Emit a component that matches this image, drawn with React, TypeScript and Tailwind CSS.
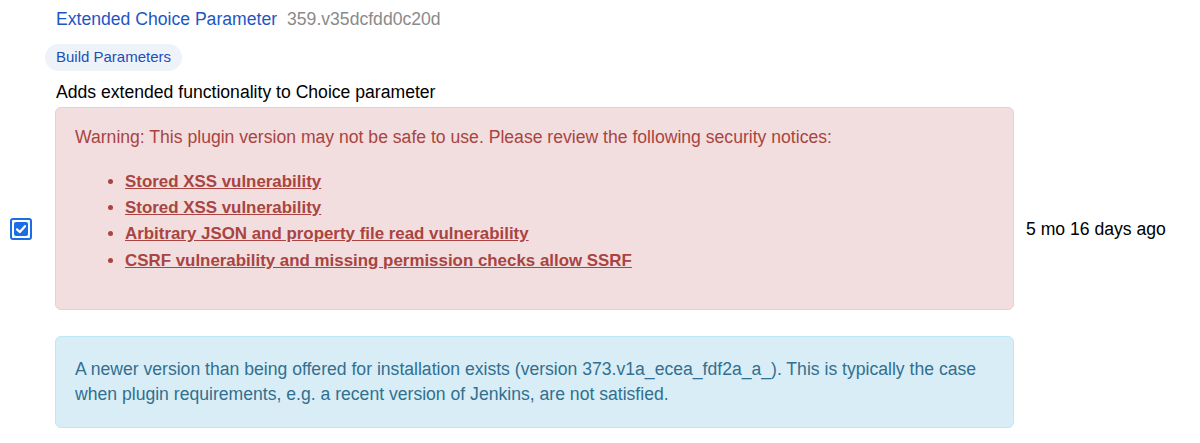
const notices = [
  "Stored XSS vulnerability",
  "Stored XSS vulnerability",
  "Arbitrary JSON and property file read vulnerability",
  "CSRF vulnerability and missing permission checks allow SSRF",
];

function Checkbox() {
  return (
    <div className="w-[22px] h-[22px] rounded-[3px] border-2 border-[#1a6fe6] p-[2px] bg-white">
      <div className="w-full h-full rounded-[2px] bg-[#1a6fe6] flex items-center justify-center">
        <svg viewBox="0 0 12 12" className="w-[12px] h-[12px]">
          <path
            d="M2 6.4 L4.8 9 L10 3.2"
            fill="none"
            stroke="white"
            strokeWidth="2.3"
            strokeLinecap="round"
            strokeLinejoin="round"
          />
        </svg>
      </div>
    </div>
  );
}

export default function App() {
  return (
    <div
      className="w-[1200px] bg-white text-black flex items-center text-[17.6px]"
      style={{ fontFamily: '"Liberation Sans", Arial, sans-serif' }}
    >
      <div className="w-[45px] pl-[10px] shrink-0">
        <Checkbox />
      </div>
      <div className="w-[981px] shrink-0 pt-[7px] pb-[31px] pr-[12px]">
        <div className="flex items-baseline gap-[10px] pl-[11px] leading-[24px]">
          <a className="text-[17.6px] text-[#1d56c4]">Extended Choice Parameter</a>
          <span className="text-[17.6px] text-[#8a8a8a]">359.v35dcfdd0c20d</span>
        </div>
        <div className="mt-[12px]">
          <span className="inline-flex items-center h-[27px] px-[11px] rounded-full bg-[#eef3fa] text-[#1d4fb8] text-[15px] font-medium">
            Build Parameters
          </span>
        </div>
        <p className="mt-[9px] pl-[11px] leading-[24px]">
          Adds extended functionality to Choice parameter
        </p>
        <div className="mt-[3px] ml-[10px] rounded-[6px] border border-[#ebccd1] bg-[#f2dede] text-[#a94442] pl-[19px] pr-[19px] pt-[17px] pb-[35px]">
          <p className="leading-[24px]">
            Warning: This plugin version may not be safe to use. Please review the following
            security notices:
          </p>
          <ul className="mt-[20px] pl-[50px] list-disc text-[16.9px] leading-[26.3px]">
            {notices.map((n, i) => (
              <li key={i}>
                <a className="font-bold underline">{n}</a>
              </li>
            ))}
          </ul>
        </div>
        <div className="mt-[26px] ml-[10px] rounded-[6px] border border-[#bce8f1] bg-[#d9edf7] text-[#31708f] leading-[25px] px-[19px] py-[20px]">
          A newer version than being offered for installation exists (version
          373.v1a_ecea_fdf2a_a_). This is typically the case when plugin requirements, e.g. a
          recent version of Jenkins, are not satisfied.
        </div>
      </div>
      <div className="whitespace-nowrap">5 mo 16 days ago</div>
    </div>
  );
}
